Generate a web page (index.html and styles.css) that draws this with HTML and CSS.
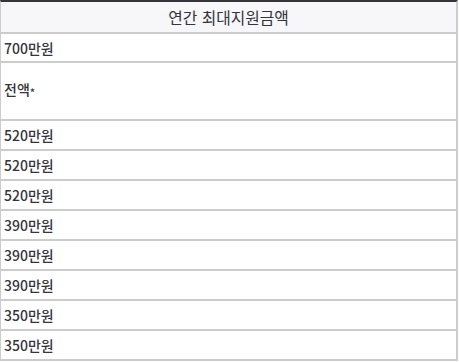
FILE: index.html
```html
<!DOCTYPE html>
<html lang="ko">
<head>
<meta charset="utf-8">
<link rel="stylesheet" href="styles.css">
</head>
<body>
<div class="table">
  <div class="cell head">연간 최대지원금액</div>
  <div class="cell first">700만원</div>
  <div class="cell tall">전액<span class="mark">*</span></div>
  <div class="cell">520만원</div>
  <div class="cell">520만원</div>
  <div class="cell">520만원</div>
  <div class="cell">390만원</div>
  <div class="cell">390만원</div>
  <div class="cell">390만원</div>
  <div class="cell">350만원</div>
  <div class="cell">350만원</div>
</div>
</body>
</html>
```

FILE: styles.css
```css
html, body {
  margin: 0;
  padding: 0;
  background: #fff;
}

.table {
  box-sizing: border-box;
  width: 458px;
  border-top: 2px solid #34363b;
  border-left: 1px solid #cccccc;
  border-right: 2px solid #cccccc;
  font-family: "Noto Sans CJK KR", "Noto Sans", sans-serif;
  color: #34353b;
  display: flex;
  flex-direction: column;
}

.cell {
  height: 28px;
  border-bottom: 2px solid #cccccc;
  display: flex;
  align-items: center;
  padding-left: 3px;
  font-size: 14px;
  font-weight: 500;
}

.head {
  height: 30px;
  justify-content: center;
  padding-left: 0;
  background: #f7f7f9;
  font-size: 15.8px;
  font-weight: 400;
}

.first {
  height: 27px;
}

.tall {
  box-sizing: border-box;
  height: 58px;
  padding-bottom: 5px;
}

.mark {
  font-size: 11px;
  align-self: flex-start;
  margin-top: 21px;
}
```
